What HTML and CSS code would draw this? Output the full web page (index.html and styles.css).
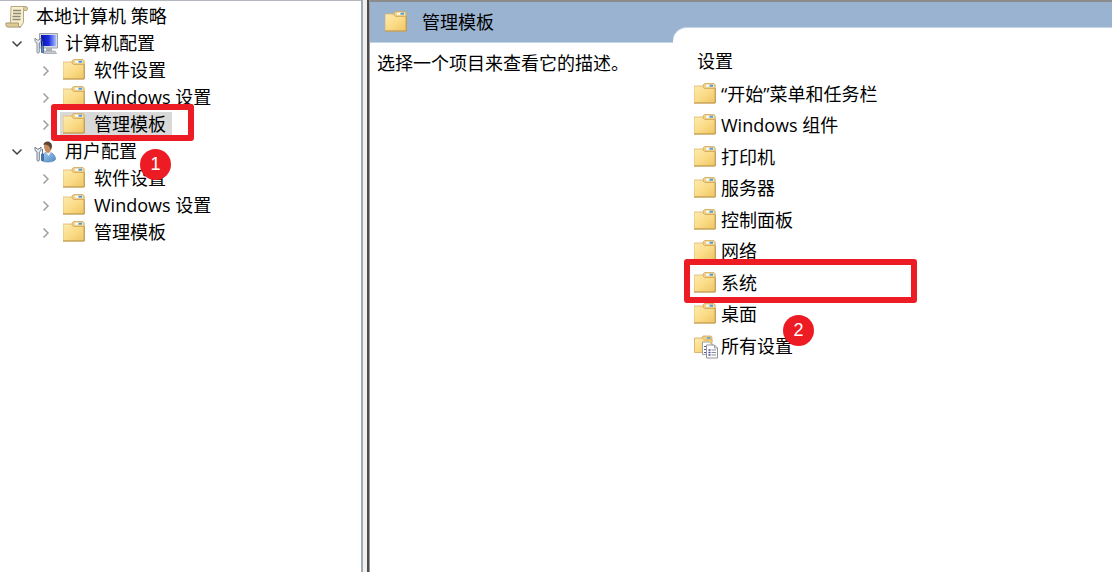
FILE: index.html
```html
<!DOCTYPE html>
<html lang="zh-CN">
<head>
  <meta charset="UTF-8">
  <meta name="viewport" content="width=device-width, initial-scale=1.0">
  <title>本地计算机 策略</title>
  <link rel="stylesheet" href="styles.css">
</head>
<body>

  <!-- Icon definitions -->
  <svg class="defs" aria-hidden="true">
    <defs>
      <linearGradient id="folderFill" x1="0" y1="0" x2="1" y2="1">
        <stop offset="0" stop-color="#fdebb0"/>
        <stop offset="0.5" stop-color="#fbdc88"/>
        <stop offset="1" stop-color="#eec565"/>
      </linearGradient>
      <linearGradient id="screenFill" x1="0" y1="0" x2="1" y2="0">
        <stop offset="0" stop-color="#0a12a0"/>
        <stop offset="0.5" stop-color="#1a2ce0"/>
        <stop offset="1" stop-color="#a8bcff"/>
      </linearGradient>
      <linearGradient id="shirtFill" x1="0" y1="0" x2="1" y2="1">
        <stop offset="0" stop-color="#a9d0f2"/>
        <stop offset="1" stop-color="#4f8ac4"/>
      </linearGradient>
    </defs>
    <symbol id="folder" viewBox="0.5 1.5 24 24">
      <path d="M0.5 4.5h9l2 2h10v15h-21z" fill="url(#folderFill)" stroke="#dcb767" stroke-width="0.8"/>
      <path d="M9.5 5.5V3.5L11 2h9.500l1.200 1.500V7H11z" fill="#efcf8c" stroke="#cfa95b" stroke-width="0.8"/>
      <path d="M12.500 3.200h7.500v2h-7.500z" fill="#fffdf2"/>
      <path d="M16 3.200h3.500v2H16z" fill="#4a9bd6"/>
      <path d="M0.500 21.500h21.300V6.800" fill="none" stroke="#bd954c"/>
    </symbol>
    <symbol id="scroll" viewBox="0 0 24 24">
      <path d="M6 1.500h14.500c2 0 2.500 3.500 0.500 4h-2.500v12L16 21.500H4L5.500 17z" fill="#f8efce" stroke="#b5a983"/>
      <path d="M18.500 5.500V3.500c0-2.600 4-2.600 4 0 0 1.400-0.800 2-2 2z" fill="#ddcc98" stroke="#b5a983"/>
      <path d="M1 18h12.500v2.500c0 1 1 1.600 2 1.600H2.800C0.800 22 0.500 19.500 1 18z" fill="#dccb95" stroke="#a99b75"/>
      <path d="M8 5.500h8M8 8.500h8M7.500 11.500h8M7.500 14.500h8" stroke="#8b8875" stroke-width="1.300"/>
    </symbol>
    <symbol id="computer" viewBox="0 0 24 24">
      <path d="M5.500 1.500h18v14.500h-18z" fill="#d8dce1" stroke="#9ba1aa"/>
      <path d="M7 3h15v11h-15z" fill="url(#screenFill)"/>
      <path d="M12 16h6v3h-6z" fill="#aeb3ba"/>
      <path d="M9 19h12l1.500 2.500h-13z" fill="#c7cbd0" stroke="#969ba3" stroke-width="0.7"/>
      <path d="M1 6v3.500L3 11v9c0 1.500 2.300 1.500 2.300 0v-9L7 9.500V6L5 8H3z" fill="#e5e9ed" stroke="#78838f" stroke-width="0.9"/>
      <path d="M8.500 9v5M7.500 14h2v6.500h-2z" fill="#5d8fc4" stroke="#496d99"/>
    </symbol>
    <symbol id="user" viewBox="0 0 24 24">
      <path d="M7.500 20c0-5 3-8 6.500-8s7.500 3 7.500 7c0 3-12 4.500-14 1z" fill="url(#shirtFill)" stroke="#5584b2" stroke-width="0.7"/>
      <path d="M12 12l2.500 4 2.500-4z" fill="#f4f7fb"/>
      <path d="M10 5.500c0-4 7.500-4 7.500 0.500 0 4-1.500 7-3.500 7s-4-3-4-7.500z" fill="#c68d5c"/>
      <path d="M9.500 5C9.500 0.500 18 0 18 6.500L17 10l-2-4-3-1.500z" fill="#594334"/>
      <path d="M1 7v3.500L3 12v8c0 1.500 2.300 1.500 2.300 0v-8L7 10.500V7L5 9H3z" fill="#e4e8ed" stroke="#697786" stroke-width="0.9"/>
      <path d="M8.500 9v5M7.500 14h2v6.500h-2z" fill="#4679b4" stroke="#40679a" stroke-width="0.9"/>
    </symbol>
    <symbol id="all-settings" viewBox="0 0.5 24 24">
      <path d="M8 3l1-1.500h8l1 1.500v4H8z" fill="#eed08a" stroke="#cfa95b" stroke-width="0.8"/>
      <path d="M13 2.700h3.500v1.500H13z" fill="#4a9bd6"/>
      <path d="M0.500 3.500h8l2 2H18V18H0.500z" fill="url(#folderFill)" stroke="#d0a95c" stroke-width="0.8"/>
      <path d="M8.500 7.500h7l3 3V20h-10z" fill="#fff" stroke="#96999d" stroke-width="0.9"/>
      <path d="M10 12h2M10 15h2M10 18h2" stroke="#595ca3"/>
      <path d="M12.500 10.500h8l3 3v10h-11z" fill="#fff" stroke="#85898e" stroke-width="0.9"/>
      <path d="M20.500 10.500v3h3" fill="none" stroke="#85898e" stroke-width="0.8"/>
      <path d="M14.500 15.500h2M14.500 18h2M14.500 20.500h2" stroke="#4144a0" stroke-width="1.300"/>
      <path d="M17.500 15.500H22M17.500 18H22M17.500 20.500H22" stroke="#8b8d94"/>
    </symbol>
    <symbol id="open" viewBox="0 0 12 12">
      <path d="M1.500 3.500L6 8l4.500-4.500" fill="none" stroke="#404040" stroke-width="1.500"/>
    </symbol>
    <symbol id="closed" viewBox="0 0 12 12">
      <path d="M3.500 1.500L8 6l-4.500 4.500" fill="none" stroke="#a0a0a0" stroke-width="1.500"/>
    </symbol>
  </svg>

  <div class="console">
    <nav class="tree" aria-label="策略树">
      <div class="row">
        <a class="node" href="#"><svg class="icon"><use href="#scroll"/></svg>本地计算机 策略</a>
      </div>
      <ul>
        <li>
          <div class="row">
            <button class="toggle" type="button" aria-label="折叠" aria-expanded="true"><svg><use href="#open"/></svg></button>
            <a class="node" href="#"><svg class="icon"><use href="#computer"/></svg>计算机配置</a>
          </div>
          <ul>
            <li class="row">
              <button class="toggle" type="button" aria-label="展开"><svg><use href="#closed"/></svg></button>
              <a class="node" href="#"><svg class="icon"><use href="#folder"/></svg>软件设置</a>
            </li>
            <li class="row">
              <button class="toggle" type="button" aria-label="展开"><svg><use href="#closed"/></svg></button>
              <a class="node" href="#"><svg class="icon"><use href="#folder"/></svg>Windows 设置</a>
            </li>
            <li class="row">
              <button class="toggle" type="button" aria-label="展开"><svg><use href="#closed"/></svg></button>
              <a class="node selected" href="#"><svg class="icon"><use href="#folder"/></svg>管理模板<span class="step step-tree">1</span></a>
            </li>
          </ul>
        </li>
        <li>
          <div class="row">
            <button class="toggle" type="button" aria-label="折叠" aria-expanded="true"><svg><use href="#open"/></svg></button>
            <a class="node" href="#"><svg class="icon"><use href="#user"/></svg>用户配置</a>
          </div>
          <ul>
            <li class="row">
              <button class="toggle" type="button" aria-label="展开"><svg><use href="#closed"/></svg></button>
              <a class="node" href="#"><svg class="icon"><use href="#folder"/></svg>软件设置</a>
            </li>
            <li class="row">
              <button class="toggle" type="button" aria-label="展开"><svg><use href="#closed"/></svg></button>
              <a class="node" href="#"><svg class="icon"><use href="#folder"/></svg>Windows 设置</a>
            </li>
            <li class="row">
              <button class="toggle" type="button" aria-label="展开"><svg><use href="#closed"/></svg></button>
              <a class="node" href="#"><svg class="icon"><use href="#folder"/></svg>管理模板</a>
            </li>
          </ul>
        </li>
      </ul>
    </nav>

    <div class="splitter"></div>

    <main class="details">
      <section class="summary">
        <h1><svg class="icon"><use href="#folder"/></svg>管理模板</h1>
        <p>选择一个项目来查看它的描述。</p>
      </section>
      <section class="settings">
        <div class="sheet">
          <h2>设置</h2>
          <ul class="items">
            <li><a href="#"><svg class="icon"><use href="#folder"/></svg>“开始”菜单和任务栏</a></li>
            <li><a href="#"><svg class="icon"><use href="#folder"/></svg>Windows 组件</a></li>
            <li><a href="#"><svg class="icon"><use href="#folder"/></svg>打印机</a></li>
            <li><a href="#"><svg class="icon"><use href="#folder"/></svg>服务器</a></li>
            <li><a href="#"><svg class="icon"><use href="#folder"/></svg>控制面板</a></li>
            <li><a href="#"><svg class="icon"><use href="#folder"/></svg>网络</a></li>
            <li class="marked"><a href="#"><svg class="icon"><use href="#folder"/></svg>系统</a><span class="step step-list">2</span></li>
            <li><a href="#"><svg class="icon"><use href="#folder"/></svg>桌面</a></li>
            <li><a href="#"><svg class="icon"><use href="#all-settings"/></svg>所有设置</a></li>
          </ul>
        </div>
      </section>
    </main>
  </div>

</body>
</html>
```
FILE: styles.css
```css
*,
*::after {
  box-sizing: border-box;
}

body {
  margin: 0;
  background-color: #fff;
  color: #000;
  font-family: "Open Sans", "Noto Sans CJK SC", sans-serif;
  font-size: 18px;
  line-height: 25px;
}

ul {
  list-style: none;
  margin: 0;
  padding: 0;
}

a {
  color: inherit;
  text-decoration: none;
}

.defs {
  position: absolute;
  width: 0;
  height: 0;
}

.icon {
  width: 24px;
  height: 24px;
  flex: none;
}

.console {
  display: flex;
  min-height: 100vh;
}

/* Left tree */
.tree {
  flex: 0 0 361px;
  border-top: 1px solid #b4b8be;
  padding: 2px 0 0 5px;
}

.tree ul ul {
  padding-left: 29px;
}

.row {
  display: flex;
  align-items: center;
  height: 27px;
}

.node {
  display: flex;
  align-items: center;
  gap: 7px;
  height: 25px;
  white-space: nowrap;
}

.toggle {
  display: flex;
  align-items: center;
  justify-content: center;
  width: 24px;
  height: 24px;
  margin-right: 2px;
  padding: 0;
  border: none;
  background: none;
}

.toggle svg {
  width: 12px;
  height: 12px;
}

.toggle + .node {
  padding: 0 6px 0 3px;
}

.selected {
  position: relative;
  background-color: #d9d9d9;
}

/* Splitter between the panes */
.splitter {
  flex: 0 0 9px;
  background-color: #f0f0f0;
  border-left: 2px solid #a0aab2;
  border-right: 1px solid #999;
  box-shadow: inset -2px 0 #4c4c4c;
}

/* Right side */
.details {
  flex: 1;
  display: flex;
  border-top: 2px solid #8b8b8b;
}

.summary {
  flex: 0 0 303px;
}

.summary h1 {
  display: flex;
  align-items: center;
  gap: 13px;
  height: 41px;
  margin: 0;
  padding: 1px 0 0 15px;
  background-color: #99b3d1;
  border-bottom: 1px solid #c5d4e8;
  font-size: 18px;
  font-weight: normal;
}

.summary p {
  margin: 8px 0 0;
  padding-left: 7px;
}

.settings {
  flex: 1;
  padding-top: 25px;
  background-color: #99b3d1;
}

.sheet {
  height: 100%;
  padding: 21px 0 0 21px;
  background-color: #fff;
  border-top: 1px solid #c5d4e8;
  border-top-left-radius: 14px;
}

.sheet h2 {
  margin: 0 0 5px;
  padding-left: 3px;
  font-size: 18px;
  font-weight: normal;
}

.items li {
  position: relative;
}

.items li:nth-child(even) {
  margin-bottom: 1px;
}

.items a {
  display: flex;
  align-items: center;
  gap: 3px;
  height: 31px;
}

/* Red frames and step numbers */
.selected::after,
.marked::after {
  content: "";
  position: absolute;
  border: 6px solid #ed1c24;
  border-radius: 3px;
}

.selected::after {
  inset: -8px -22px -4px -9px;
}

.marked::after {
  top: -9px;
  left: -10px;
  width: 233px;
  height: 44px;
}

.step {
  position: absolute;
  z-index: 1;
  width: 31px;
  height: 31px;
  border-radius: 50%;
  background-color: #ed1c24;
  color: #fff;
  font-family: "Liberation Sans", Arial, sans-serif;
  font-size: 18px;
  line-height: 31px;
  text-align: center;
}

.step-tree {
  top: 37px;
  left: 80px;
}

.step-list {
  top: 47px;
  left: 89px;
}
```
